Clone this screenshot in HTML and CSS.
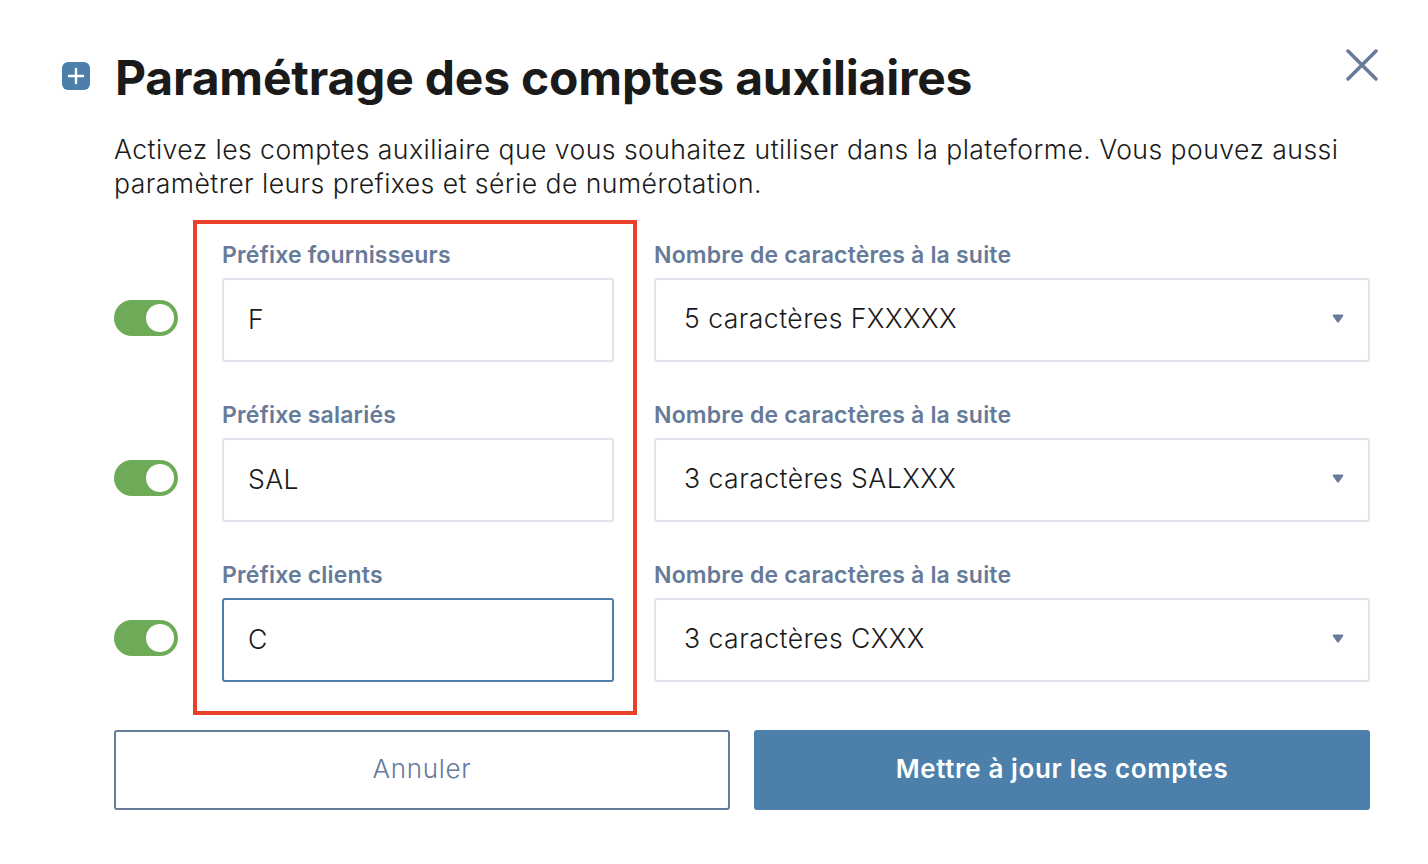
FILE: index.html

```html
<!DOCTYPE html>
<html lang="fr">
<head>
  <meta charset="UTF-8" />
  <title>Paramétrage des comptes auxiliaires</title>
  <link rel="stylesheet" href="styles.css">
</head>
<body>
  <div class="modal">
    <!-- Close -->
    <svg class="close-icon" width="32" height="32" viewBox="0 0 32 32">
      <path d="M2 2 L30 30 M30 2 L2 30" stroke="#667a99" stroke-width="3.5" stroke-linecap="round" fill="none" />
    </svg>

    <!-- Header -->
    <div class="header">
      <svg class="plus-icon" width="28" height="28" viewBox="0 0 28 28">
        <rect width="28" height="28" rx="6" fill="#4c80aa" />
        <path d="M14 7 V21 M7 14 H21" stroke="#fff" stroke-width="2.4" stroke-linecap="round" />
      </svg>
      <h1>Paramétrage des comptes auxiliaires</h1>
    </div>

    <div class="content">
      <p class="intro">Activez les comptes auxiliaire que vous souhaitez utiliser dans la plateforme. Vous pouvez aussi paramètrer leurs prefixes et série de numérotation.</p>

      <div class="rows">
        <div class="row">
          <div class="toggle"><span class="knob"></span></div>
          <div class="field">
            <label>Préfixe fournisseurs</label>
            <div class="input">F</div>
          </div>
          <div class="field">
            <label>Nombre de caractères à la suite</label>
            <div class="input select">5 caractères FXXXXX
              <svg class="arrow" width="12" height="9" viewBox="0 0 12 9"><path d="M1.5 0.5 H10.5 Q11.8 0.5 11.2 2 L7 8 Q6 9 5 8 L0.8 2 Q0.2 0.5 1.5 0.5 Z" fill="#667a99" /></svg>
            </div>
          </div>
        </div>

        <div class="row">
          <div class="toggle"><span class="knob"></span></div>
          <div class="field">
            <label>Préfixe salariés</label>
            <div class="input">SAL</div>
          </div>
          <div class="field">
            <label>Nombre de caractères à la suite</label>
            <div class="input select">3 caractères SALXXX
              <svg class="arrow" width="12" height="9" viewBox="0 0 12 9"><path d="M1.5 0.5 H10.5 Q11.8 0.5 11.2 2 L7 8 Q6 9 5 8 L0.8 2 Q0.2 0.5 1.5 0.5 Z" fill="#667a99" /></svg>
            </div>
          </div>
        </div>

        <div class="row">
          <div class="toggle"><span class="knob"></span></div>
          <div class="field">
            <label>Préfixe clients</label>
            <div class="input focused">C</div>
          </div>
          <div class="field">
            <label>Nombre de caractères à la suite</label>
            <div class="input select">3 caractères CXXX
              <svg class="arrow" width="12" height="9" viewBox="0 0 12 9"><path d="M1.5 0.5 H10.5 Q11.8 0.5 11.2 2 L7 8 Q6 9 5 8 L0.8 2 Q0.2 0.5 1.5 0.5 Z" fill="#667a99" /></svg>
            </div>
          </div>
        </div>
      </div>

      <div class="buttons">
        <button class="btn btn-cancel">Annuler</button>
        <button class="btn btn-primary">Mettre à jour les comptes</button>
      </div>
    </div>

    <!-- Annotation -->
    <div class="highlight"></div>
  </div>
</body>
</html>
```

FILE: styles.css

```css
* {
  box-sizing: border-box;
}

body {
  margin: 0;
  background-color: #fff;
  color: #1a1a1a;
  font-family: Inter, "Liberation Sans", sans-serif;
}

.modal {
  position: relative;
  width: 1428px;
  height: 864px;
  padding: 50px 58px 0 62px;
}

.close-icon {
  position: absolute;
  top: 49px;
  left: 1346px;
}

/* Header */
.header {
  display: flex;
  align-items: center;
  gap: 25px;
  height: 56px;
}

.plus-icon {
  flex: none;
  margin-top: -4px;
}

.header h1 {
  margin: 0;
  font-size: 48px;
  font-weight: 700;
  letter-spacing: -0.2px;
  line-height: 56px;
}

.content {
  padding-left: 52px;
}

.intro {
  margin: 26px 0 0;
  font-size: 26.6px;
  font-weight: 300;
  letter-spacing: 0.44px;
  line-height: 34px;
}

/* Rows */
.rows {
  margin-top: 38px;
}

.row {
  display: grid;
  grid-template-columns: 64px 436px 756px;
  height: 160px;
}

.toggle {
  position: relative;
  align-self: start;
  width: 64px;
  height: 36px;
  margin-top: 62px;
  border-radius: 18px;
  background-color: #6eab58;
}

.knob {
  position: absolute;
  top: 4px;
  right: 4px;
  width: 28px;
  height: 28px;
  border-radius: 50%;
  background-color: #fff;
}

.field {
  margin-left: 44px;
}

.field + .field {
  margin-left: 40px;
}

.field label {
  display: block;
  height: 40px;
  padding-top: 2px;
  color: #667a99;
  font-size: 23px;
  font-weight: 600;
  letter-spacing: 0.2px;
  line-height: 30px;
}

.input {
  position: relative;
  height: 84px;
  padding-left: 24px;
  border: 2px solid #e0e4ec;
  border-radius: 3px;
  background-color: #fff;
  font-size: 26.6px;
  font-weight: 300;
  letter-spacing: 0.45px;
  line-height: 79px;
}

.input.select {
  padding-left: 28px;
  line-height: 77px;
}

.input.focused {
  border-color: #4c80aa;
}

.arrow {
  position: absolute;
  top: 34px;
  right: 24px;
}

/* Buttons */
.buttons {
  display: grid;
  grid-template-columns: 616px 616px;
  column-gap: 24px;
  margin-top: 12px;
}

.btn {
  height: 80px;
  padding-bottom: 4px;
  border-radius: 3px;
  font-family: inherit;
  font-size: 26px;
}

.btn-cancel {
  border: 2px solid #667a99;
  background-color: #fff;
  color: #667a99;
  font-weight: 300;
  letter-spacing: 0.7px;
}

.btn-primary {
  border: none;
  background-color: #4c80aa;
  color: #fff;
  font-weight: 600;
  letter-spacing: 0.6px;
}

.highlight {
  position: absolute;
  top: 220px;
  left: 193px;
  width: 444px;
  height: 495px;
  border: 4px solid #ea4027;
}
```
